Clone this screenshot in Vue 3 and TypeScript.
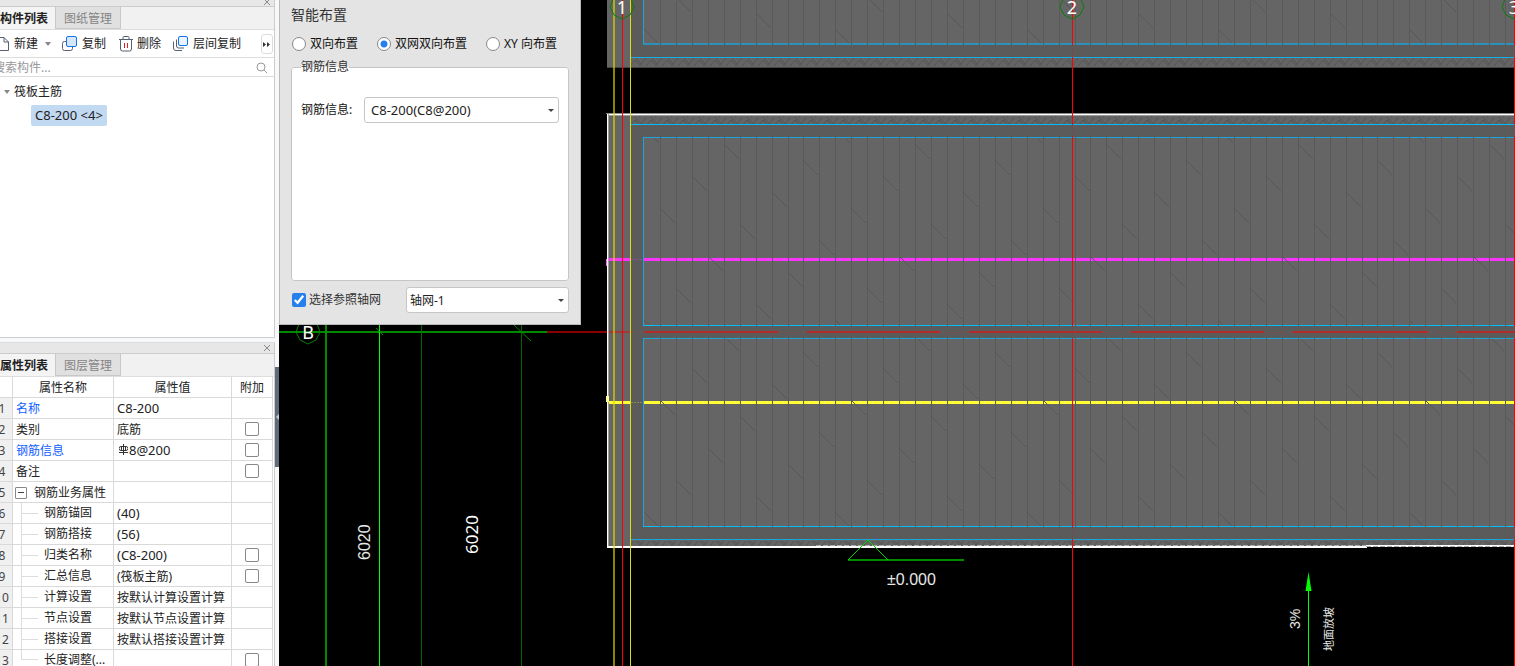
<script setup lang="ts">
import { ref } from 'vue'

interface PropertyRow {
  no: number
  name: string
  value: string
  kind: 'plain' | 'link' | 'group' | 'child'
  latin?: boolean
  rebar?: boolean
  extra?: boolean
}

const rows: PropertyRow[] = [
  { no: 1, name: '名称', value: 'C8-200', kind: 'link', latin: true },
  { no: 2, name: '类别', value: '底筋', kind: 'plain', extra: true },
  { no: 3, name: '钢筋信息', value: '8@200', kind: 'link', latin: true, rebar: true, extra: true },
  { no: 4, name: '备注', value: '', kind: 'plain', extra: true },
  { no: 5, name: '钢筋业务属性', value: '', kind: 'group' },
  { no: 6, name: '钢筋锚固', value: '(40)', kind: 'child', latin: true },
  { no: 7, name: '钢筋搭接', value: '(56)', kind: 'child', latin: true },
  { no: 8, name: '归类名称', value: '(C8-200)', kind: 'child', latin: true, extra: true },
  { no: 9, name: '汇总信息', value: '(筏板主筋)', kind: 'child', extra: true },
  { no: 10, name: '计算设置', value: '按默认计算设置计算', kind: 'child' },
  { no: 11, name: '节点设置', value: '按默认节点设置计算', kind: 'child' },
  { no: 12, name: '搭接设置', value: '按默认搭接设置计算', kind: 'child' },
  { no: 13, name: '长度调整(...', value: '', kind: 'child', extra: true },
]

const layouts = [
  { id: 'two', label: '双向布置' },
  { id: 'net', label: '双网双向布置' },
  { id: 'xy', label: 'XY 向布置' },
]
const layout = ref('net')
const useGrid = ref(true)
const search = ref('')

// Deck ribs: 53 bays between the first rib and the last one.
const ribX = (i: number): number => Math.round(660 + (845 * i) / 53)
const ribs = Array.from({ length: 54 }, (_, i) => ribX(i))

// One diagonal tick per 16px row, repeating every 12 bays and moving 5 bays per row.
function ticks(x0: number, y0: number, first: number, last: number): string {
  const parts: string[] = []
  for (let r = first; r <= last; r++) {
    const bay = (((x0 + 5 * r) % 12) + 12) % 12
    for (let b = bay - 12; b < 54; b += 12) {
      if (b < -1) continue
      const x = ribX(b)
      parts.push(`M${x} ${y0 + 16 * r}l15 15`)
    }
  }
  return parts.join('')
}
const ticksTop = ticks(6, 13, -1, 1)
const ticksMain = ticks(3, 256, -8, 16)

const axes = [
  { x: 622, label: '1' },
  { x: 1072, label: '2' },
  { x: 1514, label: '3' },
]
const octagon = (x: number, y: number): string =>
  [[0, 12], [8, 8], [12, 0], [9, -8], [0, -12], [-9, -8], [-12, 0], [-8, 8]]
    .map(([dx, dy]) => `${x + dx},${y + dy}`)
    .join(' ')
</script>

<template>
  <div class="app">
    <aside class="side">
      <section class="panel parts">
        <div class="strip short">
          <button class="close" aria-label="关闭"><svg width="8" height="8" viewBox="0 0 8 8"><path d="M1 1l6 6M7 1l-6 6" /></svg></button>
        </div>
        <div class="tabs">
          <button class="tab on">构件列表</button><button class="tab">图纸管理</button>
        </div>
        <div class="tools">
          <button class="tool new">
            <svg width="15" height="16" viewBox="0 0 15 16"><path d="M2 1.500h7l4.500 4.500v8.500h-11.500zM9 1.500v4.500h4.500" fill="#fff" stroke="#566070" /></svg>
            新建<i class="caret"></i>
          </button>
          <button class="tool copy">
            <svg width="16" height="16" viewBox="0 0 16 16"><path d="M5 5.500H2.500a2 2 0 0 0-2 2v5a2 2 0 0 0 2 2h6a2 2 0 0 0 2-2V11" fill="none" stroke="#566070" /><rect x="4.500" y=".5" width="10" height="10" rx="1.500" fill="#d5e6fb" stroke="#1473e6" /></svg>
            复制
          </button>
          <button class="tool del">
            <svg width="14" height="16" viewBox="0 0 14 16"><path d="M0 3.500h14M4 3V1.500a1 1 0 0 1 1-1h4a1 1 0 0 1 1 1V3M1.500 4v9a2 2 0 0 0 2 2h7a2 2 0 0 0 2-2V4" fill="none" stroke="#566070" /><path d="M5.500 7v5M8.500 7v5" stroke="#e02020" /></svg>
            删除
          </button>
          <button class="tool layer">
            <svg width="16" height="16" viewBox="0 0 16 16"><path d="M3.500 3.500v6.500a2 2 0 0 0 2 2H11M.5 5.500V12a2.500 2.500 0 0 0 2.500 2.500h6" fill="none" stroke="#566070" /><rect x="5.500" y=".5" width="9" height="9" rx="1.500" fill="#eaf3fe" stroke="#1473e6" /></svg>
            层间复制
          </button>
          <button class="more" aria-label="更多"><svg width="8" height="5" viewBox="0 0 8 5"><path d="M0 0l3 2.500L0 5zM4 0l3 2.500L4 5z" fill="#333" /></svg></button>
        </div>
        <div class="find">
          <input v-model="search" type="text" placeholder="搜索构件..." aria-label="搜索构件" />
          <svg width="12" height="12" viewBox="0 0 12 12"><circle cx="5" cy="5" r="4" fill="none" stroke="#999" /><path d="M8 8l3 3" stroke="#999" /></svg>
        </div>
        <div class="tree">
          <button class="node"><i class="caret"></i>筏板主筋</button>
          <button class="leaf latin">C8-200 &lt;4&gt;</button>
        </div>
      </section>

      <section class="panel props">
        <div class="strip">
          <button class="close" aria-label="关闭"><svg width="8" height="8" viewBox="0 0 8 8"><path d="M1 1l6 6M7 1l-6 6" /></svg></button>
        </div>
        <div class="tabs">
          <button class="tab on">属性列表</button><button class="tab">图层管理</button>
        </div>
        <table>
          <colgroup><col class="c0" /><col class="c1" /><col class="c2" /><col class="c3" /></colgroup>
          <thead>
            <tr><th></th><th>属性名称</th><th>属性值</th><th>附加</th></tr>
          </thead>
          <tbody>
            <tr v-for="r in rows" :key="r.no" :class="r.kind">
              <td class="no">{{ r.no }}</td>
              <td class="name">
                <button v-if="r.kind === 'group'" class="fold" aria-label="折叠"></button>
                <i v-if="r.kind === 'child'" class="branch"></i>{{ r.name }}
              </td>
              <td class="value" :class="{ latin: r.latin }">
                <svg v-if="r.rebar" class="rebar" width="9" height="11" viewBox="0 0 9 11"><path d="M4.500 0v11M2.500 2v4M6.500 2v4M0 8.500h9M2 2.500h5a1.500 1.500 0 0 1 0 4H2a1.500 1.500 0 0 1 0-4z" fill="none" stroke="#333" /></svg>{{ r.value }}
              </td>
              <td class="extra"><input v-if="r.extra" type="checkbox" :aria-label="r.name + '附加'" /></td>
            </tr>
          </tbody>
        </table>
      </section>
    </aside>

    <div class="gutter"><button class="grip" aria-label="收起"></button></div>

    <main class="stage">
      <svg class="drawing" viewBox="279 0 1236 666" preserveAspectRatio="xMinYMin slice">
        <defs>
          <pattern id="chevron" width="16" height="10" patternUnits="userSpaceOnUse" x="630" y="57">
            <path d="M0 9l5-6 5 5M5 0l7 8M9 10l7-9" fill="none" stroke="#535353" />
          </pattern>
          <clipPath id="decks">
            <path d="M644 0H1515V43H644zM644 138H1515V325H644zM644 339H1515V526H644z" />
          </clipPath>
        </defs>

        <g shape-rendering="crispEdges">
          <!-- slabs -->
          <rect x="607" y="0" width="908" height="68" fill="#656565" />
          <rect x="607" y="67" width="908" height="1" fill="#444" />
          <rect x="630" y="0" width="14" height="57" fill="#5b5b5b" />
          <rect x="643" y="45" width="872" height="12" fill="#5b5b5b" />
          <rect x="607" y="114" width="908" height="433" fill="#656565" />
          <rect x="630" y="124" width="885" height="13" fill="#5b5b5b" />
          <rect x="630" y="124" width="14" height="416" fill="#5b5b5b" />
          <rect x="643" y="326" width="872" height="12" fill="#5b5b5b" />
          <rect x="643" y="527" width="872" height="13" fill="#5b5b5b" />
        </g>
        <rect x="630" y="58" width="885" height="8" fill="url(#chevron)" />
        <rect x="630" y="116" width="885" height="8" fill="url(#chevron)" />
        <rect x="630" y="541" width="885" height="5" fill="url(#chevron)" />

        <g shape-rendering="crispEdges">
          <!-- level lines -->
          <rect x="607" y="258" width="23" height="3" fill="#ff33ff" />
          <rect x="644" y="258" width="871" height="3" fill="#ff33ff" />
          <rect x="606" y="259" width="3" height="7" fill="#ff66ff" />
          <path d="M631 259.500H643" stroke="#914f91" stroke-dasharray="2 1" />
          <rect x="607" y="401" width="23" height="3" fill="#ffff33" />
          <rect x="644" y="401" width="871" height="3" fill="#ffff33" />
          <path d="M631 402.500H643" stroke="#8c8c50" stroke-dasharray="2 1" />
          <!-- slab edges -->
          <rect x="630" y="57" width="885" height="1" fill="#15aee8" />
          <rect x="643" y="43" width="872" height="2" fill="#2b90ba" />
          <rect x="643" y="0" width="1" height="44" fill="#1aa5dc" />
          <rect x="630" y="124" width="885" height="1" fill="#00bfff" />
          <rect x="643" y="137" width="872" height="1" fill="#1aa5dc" />
          <rect x="643" y="137" width="1" height="189" fill="#1aa5dc" />
          <rect x="643" y="325" width="872" height="1" fill="#00bfff" />
          <rect x="643" y="338" width="872" height="1" fill="#1aa5dc" />
          <rect x="643" y="338" width="1" height="189" fill="#1aa5dc" />
          <rect x="643" y="526" width="872" height="1" fill="#00bfff" />
          <rect x="630" y="539" width="885" height="1" fill="#1aa5dc" />
        </g>

        <!-- deck ribs and ticks -->
        <g v-for="x in ribs" :key="x" fill="#5a5a5a" shape-rendering="crispEdges">
          <rect :x="x" y="0" width="1" height="45" />
          <rect :x="x" y="137" width="1" height="189" />
          <rect :x="x" y="338" width="1" height="189" />
        </g>
        <g clip-path="url(#decks)" class="tick">
          <path :d="ticksTop" />
          <path :d="ticksMain" />
        </g>

        <g shape-rendering="crispEdges">
          <rect x="606" y="113" width="909" height="1" fill="#8a8a8a" />
          <rect x="607" y="114" width="908" height="1" fill="#fff" />
          <rect x="607" y="115" width="908" height="1" fill="#999" />
          <rect x="607" y="114" width="1" height="434" fill="#fff" />
          <rect x="608" y="114" width="1" height="434" fill="#a0a0a0" />
          <rect x="606" y="396" width="3" height="6" fill="#ffff99" />
          <rect x="607" y="546" width="760" height="2" fill="#fff" />
          <rect x="1366" y="545" width="149" height="2" fill="#fff" />
          <path d="M816 545.500H1366M1366 546.500H1515" stroke="#aaa" stroke-dasharray="5 2" />

          <!-- axis grid -->
          <rect x="279" y="331" width="268" height="2" fill="#008a00" />
          <rect x="547" y="331" width="60" height="2" fill="#8b0000" />
          <rect x="609" y="331" width="21" height="2" fill="#a23a3a" />
          <path d="M644 332H778M807 332H940M969 332H1102M1131 332H1264M1293 332H1428M1457 332H1515" stroke="#b22c2c" stroke-width="2" />
          <path d="M631 332.500H643M778 332.500H807M940 332.500H969M1102 332.500H1131M1264 332.500H1293M1428 332.500H1457" stroke="#8b4a4a" stroke-dasharray="2 2" />
          <rect x="613" y="0" width="2" height="666" fill="#e0d800" fill-opacity=".62" />
          <rect x="630" y="0" width="1" height="666" fill="#dede10" />
          <rect x="622" y="0" width="1" height="666" fill="#ff0000" />
          <path d="M1072.500 0V45M1072.500 57V124M1072.500 137V326M1072.500 338V527M1072.500 539V666M1514.500 0V45M1514.500 57V124M1514.500 137V326M1514.500 338V527M1514.500 539V666" stroke="#ff0000" />
          <path d="M1072.500 45V57M1072.500 124V137M1072.500 326V338M1072.500 527V539M1514.500 45V57M1514.500 124V137M1514.500 326V338M1514.500 527V539" stroke="#a03030" stroke-dasharray="1 2" />
          <rect x="325" y="325" width="2" height="341" fill="#008a00" />
          <rect x="379" y="325" width="1" height="341" fill="#00ff00" />
          <rect x="421" y="325" width="1" height="341" fill="#006800" />
          <rect x="521" y="325" width="1" height="341" fill="#006800" />
          <rect x="848" y="559" width="116" height="2" fill="#008a00" />
          <rect x="1308" y="590" width="1" height="76" fill="#00ff00" />
        </g>
        <path d="M376 328l7 7M514 325l17 16" stroke="#008a00" />
        <path d="M848 560l20-20 20 20" fill="none" stroke="#00d400" />
        <path d="M1308.500 572l3 19h-6z" fill="#00ff00" />

        <g fill="none" stroke="#0a7d0a">
          <polygon v-for="a in axes" :key="a.x" :points="octagon(a.x, 7)" />
          <polygon :points="octagon(308, 332)" />
        </g>
        <g class="mark">
          <text v-for="a in axes" :key="a.x" :x="a.x" y="14">{{ a.label }}</text>
          <text x="308" y="339">B</text>
        </g>
        <g class="note">
          <text x="887" y="585">±0.000</text>
          <text transform="translate(370 560) rotate(-90)">6020</text>
          <text transform="translate(478 554) rotate(-90)" class="plain">6020</text>
          <text transform="translate(1300 629) rotate(-90)" class="slope">3%</text>
          <text transform="translate(1333 651) rotate(-90)" class="han">地面放坡</text>
        </g>
      </svg>

      <form class="dialog" @submit.prevent>
        <h1>智能布置</h1>
        <div class="modes">
          <label v-for="l in layouts" :key="l.id"><input v-model="layout" type="radio" name="layout" :value="l.id" />{{ l.label }}</label>
        </div>
        <fieldset>
          <legend>钢筋信息</legend>
          <div class="line">
            <label for="rebar">钢筋信息:</label>
            <span class="pick"><select id="rebar" class="latin"><option>C8-200(C8@200)</option></select><i class="caret"></i></span>
          </div>
        </fieldset>
        <div class="foot">
          <label><input v-model="useGrid" type="checkbox" />选择参照轴网</label>
          <span class="pick"><select aria-label="轴网"><option>轴网-1</option></select><i class="caret"></i></span>
        </div>
      </form>
    </main>
  </div>
</template>

<style>
body {
  background: #000;
}
</style>

<style scoped>
* {
  box-sizing: border-box;
}
.app {
  display: flex;
  height: 100vh;
  overflow: hidden;
  background: #f7f8f9;
  color: #222;
  font: 12px/16px "Noto Sans", "Noto Sans CJK SC", sans-serif;
}
button,
input,
select {
  margin: 0;
  padding: 0;
  border: 0;
  background: none;
  color: inherit;
  font: inherit;
}
.latin,
select.latin {
  font-size: 13px;
}
.caret {
  display: inline-block;
  border: 3px solid transparent;
  border-top: 4px solid #888;
  border-bottom: 0;
}

/* side panels */
.side {
  display: flex;
  flex: none;
  flex-direction: column;
  gap: 4px;
  width: 275px;
  overflow: hidden;
}
.panel {
  overflow: hidden;
  border-right: 1px solid #ccc;
  background: #fff;
}
.parts {
  flex: none;
  border-bottom: 1px solid #ccc;
}
.props {
  flex: 1;
  border-top: 1px solid #ddd;
}
.strip {
  display: flex;
  align-items: center;
  justify-content: flex-end;
  height: 11px;
  padding-right: 3px;
  border-bottom: 1px solid #ccc;
  background: #e7e7e7;
}
.strip.short {
  align-items: flex-end;
  height: 7px;
}
.close {
  display: flex;
}
.close path {
  stroke: #888;
}
.tabs {
  display: flex;
  height: 23px;
  border-bottom: 1px solid #ddd;
  background: #f1f1f1;
}
.tab {
  width: 66px;
  padding-top: 2px;
  border: 1px solid #c8c8c8;
  border-width: 0 1px 1px;
  background: #e0e0e0;
  color: #858585;
}
.tab.on {
  width: 55px;
  padding-right: 9px;
  border: 0;
  background: #f4f4f4;
  color: #222;
  font-weight: 700;
  white-space: nowrap;
}
.tools {
  display: flex;
  align-items: center;
  height: 28px;
  padding-top: 1px;
  border-bottom: 1px solid #ddd;
}
.tool {
  display: flex;
  flex: none;
  align-items: center;
  gap: 4px;
}
.tool.new {
  margin-left: -5px;
}
.tool.new .caret {
  margin-left: 3px;
}
.tool.copy {
  margin-left: 11px;
}
.tool.del {
  margin-left: 13px;
}
.tool.layer {
  margin-left: 12px;
}
.more {
  display: flex;
  align-items: center;
  justify-content: center;
  width: 12px;
  height: 20px;
  margin: 0 1px 0 auto;
  border: 1px solid #ddd;
  border-radius: 3px;
}
.find {
  display: flex;
  align-items: center;
  height: 19px;
  padding: 1px 6px 0 0;
  border-bottom: 1px solid #ddd;
}
.find input {
  flex: 1;
  min-width: 0;
  margin-left: -7px;
  outline: 0;
}
.find input::placeholder {
  color: #999;
  opacity: 1;
}
.tree {
  display: flex;
  flex-direction: column;
  align-items: flex-start;
  gap: 5px;
  height: 260px;
  padding: 7px 0 0 4px;
}
.node {
  display: flex;
  align-items: center;
  gap: 4px;
}
.leaf {
  height: 21px;
  margin-left: 27px;
  padding: 0 4px 1px;
  border-radius: 2px;
  background: #c2d9f2;
}

/* property table */
table {
  width: 281px;
  margin-left: -8px;
  border-spacing: 0;
  table-layout: fixed;
}
.c0 {
  width: 21px;
}
.c1 {
  width: 101px;
}
.c2 {
  width: 118px;
}
.c3 {
  width: 41px;
}
th,
td {
  height: 21px;
  padding: 2px 0 0 3px;
  overflow: hidden;
  border-right: 1px solid #d9d9d9;
  border-bottom: 1px solid #d9d9d9;
  font-weight: 400;
  line-height: 18px;
  white-space: nowrap;
}
td.latin {
  padding-top: 0;
}
th,
td.no {
  padding-left: 0;
  text-align: center;
}
td.extra {
  padding: 0;
}
.no {
  background: #f0f0f0;
  color: #444;
}
.link .name {
  color: #1060ff;
}
.extra input {
  display: block;
  width: 14px;
  height: 14px;
  margin: 0 auto;
  border: 1px solid #888;
  border-radius: 2px;
  background: #fff;
  appearance: none;
}
.rebar {
  margin: 0 1px 4px 2px;
  vertical-align: middle;
}
.fold {
  width: 12px;
  height: 12px;
  margin: 0 7px 2px -1px;
  border: 1px solid #888;
  border-radius: 1px;
  background: linear-gradient(#444, #444) center / 6px 1px no-repeat;
  vertical-align: middle;
}
.child td.name {
  padding: 0 0 0 8px;
  line-height: 20px;
}
.branch {
  display: inline-block;
  width: 17px;
  height: 20px;
  margin-right: 6px;
  border-left: 1px solid #ddd;
  background: linear-gradient(#ddd, #ddd) center / 100% 1px no-repeat;
  vertical-align: top;
}
tr:last-child .branch {
  height: 10px;
  border-bottom: 1px solid #ddd;
  background: none;
}

.gutter {
  display: flex;
  flex: none;
  width: 4px;
}
.grip {
  width: 4px;
  height: 100px;
  margin-top: 367px;
  background: #5f6b79;
}
.grip::before {
  display: block;
  border: 3px solid transparent;
  border-right: 3px solid #c8ccd2;
  border-left: 0;
  content: "";
}

/* model view */
.stage {
  position: relative;
  flex: 1;
  min-width: 0;
  overflow: hidden;
  background: #000;
}
.drawing {
  display: block;
  width: 100%;
  height: 100%;
}
.tick {
  fill: none;
  stroke: #575757;
}
.mark text {
  fill: #fff;
  font-family: "Noto Sans", sans-serif;
  font-size: 18px;
  text-anchor: middle;
}
.note text {
  fill: #e8e8e8;
  font-family: "Liberation Sans", sans-serif;
  font-size: 16px;
}
.note .plain {
  fill: #fff;
  font-family: "Noto Sans", sans-serif;
  font-size: 17px;
}
.note .slope {
  font-size: 14px;
}
.note .han {
  font-family: "Noto Sans CJK SC", sans-serif;
  font-size: 11px;
}

.dialog {
  position: absolute;
  top: 0;
  left: 0;
  width: 302px;
  padding: 7px 11px 11px;
  border: 1px solid #b9b9b9;
  border-top: 0;
  background: #e4e4e4;
  color: #111;
}
h1 {
  margin: 0;
  color: #333;
  font-size: 14px;
  font-weight: 400;
  line-height: 16px;
}
.modes {
  display: flex;
  gap: 19px;
  margin: 13px 0 0 1px;
}
.modes label,
.foot label {
  display: flex;
  align-items: center;
  gap: 4px;
}
.foot label {
  gap: 3px;
}
.modes input {
  width: 14px;
  height: 14px;
  border: 1px solid #888;
  border-radius: 50%;
  background: #fff;
  appearance: none;
}
.modes input:checked {
  background: radial-gradient(circle, #2680eb 3px, #fff 4px);
}
.foot input {
  width: 14px;
  height: 14px;
  accent-color: #2680eb;
}
fieldset {
  min-width: 0;
  height: 222px;
  margin: 7px 0 0;
  padding: 22px 9px 0;
  border: 1px solid #c6c6c6;
  border-radius: 3px;
  background: #fff;
}
legend {
  padding: 0;
  color: #333;
}
.line {
  display: flex;
  align-items: center;
  justify-content: space-between;
}
.pick {
  position: relative;
  display: flex;
  width: 195px;
}
.pick select {
  width: 100%;
  height: 26px;
  padding: 0 6px;
  border: 1px solid #c6c6c6;
  border-radius: 3px;
  background: #fff;
  color: #222;
  appearance: none;
}
.pick .caret {
  position: absolute;
  top: 12px;
  right: 5px;
  border-top: 3px solid #444;
  pointer-events: none;
}
.foot {
  display: flex;
  align-items: center;
  justify-content: space-between;
  margin: 6px 0 0 1px;
  color: #333;
}
.foot .pick {
  width: 163px;
}
.foot .pick select {
  padding: 1px 3px 0;
}
</style>
